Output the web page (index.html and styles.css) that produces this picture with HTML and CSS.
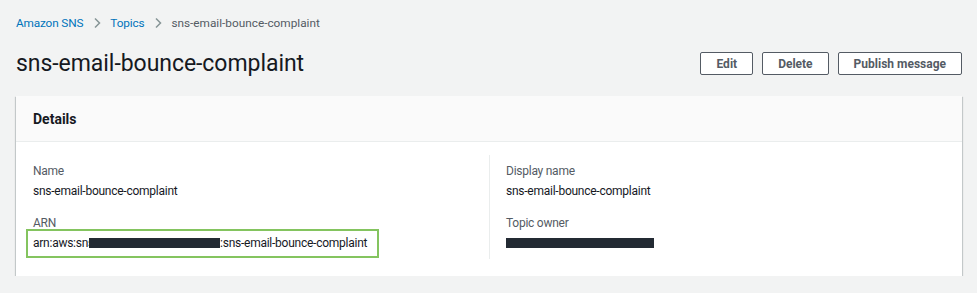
FILE: index.html
```html
<!DOCTYPE html>
<html lang="en">
  <head>
    <meta charset="UTF-8" />
    <title>sns-email-bounce-complaint</title>
    <link rel="stylesheet" href="styles.css">
  </head>
  <body>
    <nav class="breadcrumbs">
      <a href="#">Amazon SNS</a>
      <span class="sep">
        <svg width="10" height="12" viewBox="0 0 10 12"><path d="M3 1.5 L7.5 6 L3 10.5" fill="none" stroke="#879596" stroke-width="1.5"/></svg>
      </span>
      <a href="#">Topics</a>
      <span class="sep">
        <svg width="10" height="12" viewBox="0 0 10 12"><path d="M3 1.5 L7.5 6 L3 10.5" fill="none" stroke="#879596" stroke-width="1.5"/></svg>
      </span>
      <span class="current">sns-email-bounce-complaint</span>
    </nav>

    <div class="page-header">
      <h1>sns-email-bounce-complaint</h1>
      <div class="actions">
        <button>Edit</button>
        <button>Delete</button>
        <button>Publish message</button>
      </div>
    </div>

    <div class="card">
      <div class="card-header">
        <h2>Details</h2>
      </div>
      <div class="card-body">
        <div class="column">
          <div class="label">Name</div>
          <div class="value">sns-email-bounce-complaint</div>
          <div class="label spaced">ARN</div>
          <div class="value">
            <span class="highlight">arn:aws:sns<span class="redacted arn-redact"></span>:sns-email-bounce-complaint</span>
          </div>
        </div>
        <div class="column divided">
          <div class="label">Display name</div>
          <div class="value">sns-email-bounce-complaint</div>
          <div class="label spaced">Topic owner</div>
          <div class="value"><span class="redacted owner-redact"></span></div>
        </div>
      </div>
    </div>
  </body>
</html>
```

FILE: styles.css
```css
* {
  margin: 0;
  padding: 0;
  box-sizing: border-box;
}

body {
  background: #f2f3f3;
  font-family: "Roboto", "Liberation Sans", sans-serif;
  color: #16191f;
  padding: 0 15px 0 16px;
}

.breadcrumbs {
  display: flex;
  align-items: center;
  height: 16px;
  margin-top: 15px;
  font-size: 11.8px;
  letter-spacing: -0.15px;
}

.breadcrumbs a {
  color: #0073bb;
  text-decoration: none;
}

.breadcrumbs .sep {
  display: flex;
  align-items: center;
  margin: 0 8px 0 9px;
}

.breadcrumbs .current {
  color: #545b64;
  letter-spacing: 0;
}

.page-header {
  display: flex;
  justify-content: space-between;
  align-items: center;
  margin-top: 21px;
  height: 23px;
}

h1 {
  font-size: 23px;
  font-weight: 400;
  line-height: 30px;
  letter-spacing: -0.05px;
  color: #16191f;
}

.actions {
  display: flex;
  gap: 9px;
}

.actions button {
  font-family: inherit;
  font-size: 12px;
  font-weight: 700;
  color: #545b64;
  background: #fff;
  border: 1px solid #545b64;
  border-radius: 2px;
  height: 23px;
  padding: 0 15px;
}

.card {
  margin-top: 21px;
  background: #fff;
  box-shadow: 0 1px 1px 0 rgba(0, 28, 36, 0.3), 1px 1px 1px 0 rgba(0, 28, 36, 0.15), -1px 1px 1px 0 rgba(0, 28, 36, 0.15);
}

.card-header {
  height: 46px;
  display: flex;
  align-items: center;
  padding: 0 17px;
  background: #fafafa;
  border-bottom: 1px solid #eaeded;
}

.card-header h2 {
  font-size: 14px;
  font-weight: 700;
}

.card-body {
  display: grid;
  grid-template-columns: 1fr 1fr;
  padding: 13px 17px 17px;
}

.column {
  padding: 6px 0 6px;
}

.column.divided {
  border-left: 1px solid #eaeded;
  padding-left: 16px;
}

.label {
  font-size: 12px;
  line-height: 20px;
  color: #545b64;
  letter-spacing: -0.25px;
}

.label.spaced {
  margin-top: 12px;
}

.value {
  font-size: 12px;
  line-height: 20px;
  color: #16191f;
  letter-spacing: -0.25px;
}

.highlight {
  display: inline-block;
  border: 2px solid #84c45f;
  padding: 2px 10px 3px 5px;
  margin: -4px 0 -5px -7px;
}

.redacted {
  display: inline-block;
  height: 10px;
  background: #232a33;
  vertical-align: -1px;
}

.arn-redact {
  width: 131px;
  margin-left: -5px;
}

.owner-redact {
  width: 148px;
}
```
